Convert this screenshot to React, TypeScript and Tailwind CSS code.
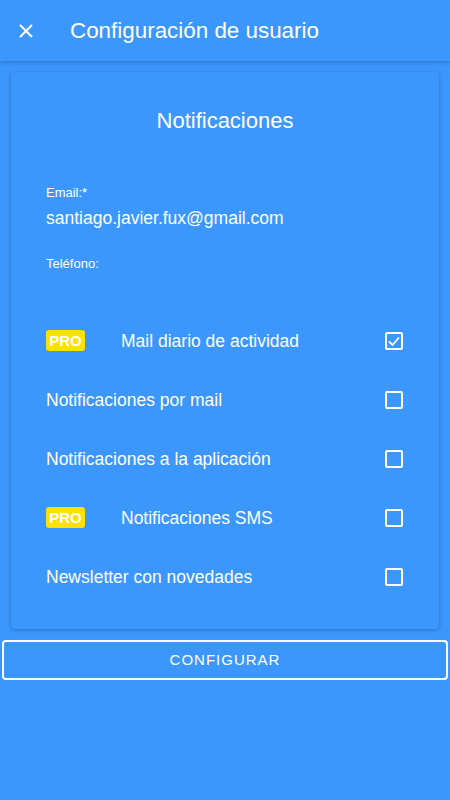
import React from "react";

const font = { fontFamily: '"Liberation Sans", Arial, sans-serif' };

function Check({ checked }: { checked?: boolean }) {
  return (
    <div className="w-[18px] h-[18px] border-2 border-white rounded-[2px] flex items-center justify-center">
      {checked && (
        <svg width="14" height="14" viewBox="0 0 14 14" fill="none">
          <path d="M2 7.5 L5.5 11 L12 3.5" stroke="white" strokeWidth="1.8" />
        </svg>
      )}
    </div>
  );
}

function Pro() {
  return (
    <span className="w-[39px] h-[21px] rounded-[3px] bg-[#ffe100] text-white font-bold text-[15px] flex items-center justify-center leading-none">
      PRO
    </span>
  );
}

const rows: { label: string; pro?: boolean; checked?: boolean }[] = [
  { label: "Mail diario de actividad", pro: true, checked: true },
  { label: "Notificaciones por mail" },
  { label: "Notificaciones a la aplicación" },
  { label: "Notificaciones SMS", pro: true },
  { label: "Newsletter con novedades" },
];

export default function App() {
  return (
    <div className="w-[450px] h-[800px] bg-[#3c97fd] text-white overflow-hidden" style={font}>
      <div className="h-[61px] flex items-center shadow-[0_2px_4px_rgba(0,0,0,0.2)] relative z-10">
        <div className="w-[70px] flex justify-center">
          <svg width="14" height="14" viewBox="0 0 14 14" className="ml-[-18px]">
            <path d="M1 1 L13 13 M13 1 L1 13" stroke="white" strokeWidth="2" />
          </svg>
        </div>
        <span className="text-[22.4px]">Configuración de usuario</span>
      </div>
      <div className="mx-[11px] mt-[11px] h-[557px] rounded-[4px] shadow-[0_1px_4px_rgba(0,0,0,0.25)] px-[35px]">
        <div className="text-[22px] text-center pt-[32px]">Notificaciones</div>
        <div className="mt-[46px] text-[13px]">Email:*</div>
        <div className="mt-[2px] text-[17.5px]">santiago.javier.fux@gmail.com</div>
        <div className="mt-[23px] text-[13px]">Teléfono:</div>
        <div className="mt-[38px] flex flex-col">
          {rows.map((r) => (
            <div key={r.label} className="h-[59px] flex items-center">
              {r.pro && <div className="w-[75px]"><Pro /></div>}
              <span className="text-[17.5px] flex-1">{r.label}</span>
              <div className="mr-[1px]"><Check checked={r.checked} /></div>
            </div>
          ))}
        </div>
      </div>
      <div className="mx-[2px] mt-[11px] h-[40px] border-2 border-white rounded-[4px] flex items-center justify-center text-[15px] tracking-[1px]">
        CONFIGURAR
      </div>
    </div>
  );
}
